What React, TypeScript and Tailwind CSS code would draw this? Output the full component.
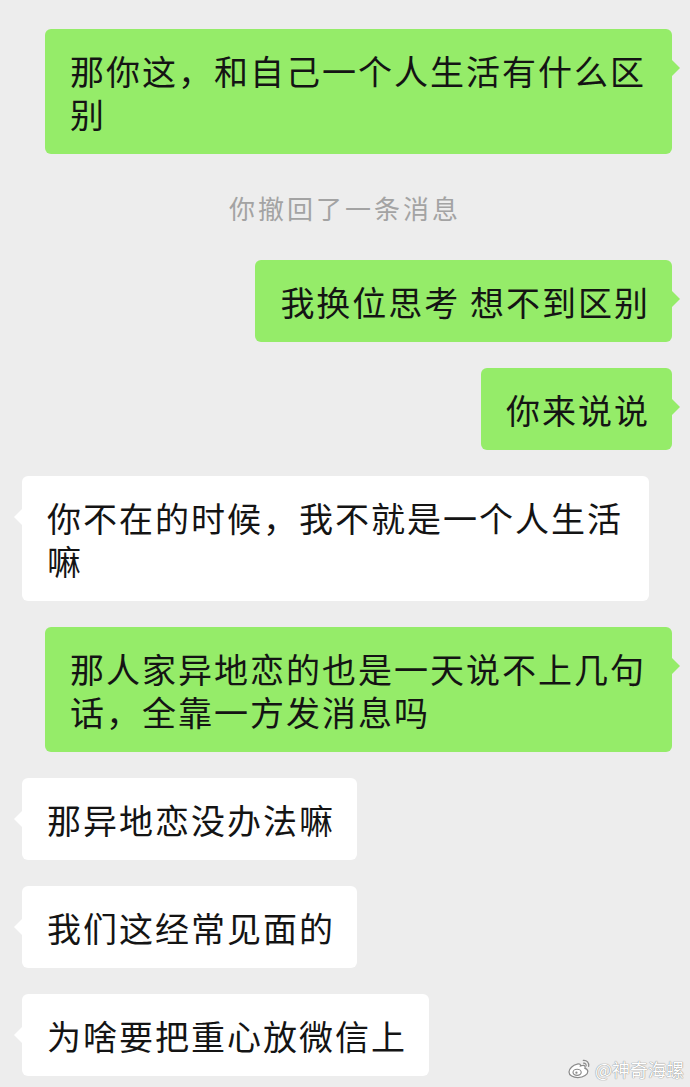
import React from "react";

type Msg =
  | { kind: "me"; text: string }
  | { kind: "other"; text: string }
  | { kind: "recall"; text: string };

const messages: Msg[] = [
  { kind: "me", text: "那你这，和自己一个人生活有什么区别" },
  { kind: "recall", text: "你撤回了一条消息" },
  { kind: "me", text: "我换位思考 想不到区别" },
  { kind: "me", text: "你来说说" },
  { kind: "other", text: "你不在的时候，我不就是一个人生活嘛" },
  { kind: "me", text: "那人家异地恋的也是一天说不上几句话，全靠一方发消息吗" },
  { kind: "other", text: "那异地恋没办法嘛" },
  { kind: "other", text: "我们这经常见面的" },
  { kind: "other", text: "为啥要把重心放微信上" },
];

function Bubble({ text, mine }: { text: string; mine: boolean }) {
  return (
    <div
      className={
        "relative max-w-[627px] rounded-[6px] pl-[25px] pr-[22px] pt-[20px] pb-[19px] text-[34px] leading-[43px] tracking-[2px] text-[#141414] " +
        (mine ? "bg-[#95ec69]" : "bg-white")
      }
    >
      {text}
      {mine ? (
        <span className="absolute left-full top-[31px] h-0 w-0 border-y-[8px] border-l-[8px] border-y-transparent border-l-[#95ec69]" />
      ) : (
        <span className="absolute right-full top-[33px] h-0 w-0 border-y-[8px] border-r-[8px] border-y-transparent border-r-white" />
      )}
    </div>
  );
}

function WeiboMark() {
  return (
    <div className="absolute bottom-[8px] right-[6px] flex items-center gap-[3px] text-[18px] leading-none text-white [text-shadow:0_0_1px_#8a8a8a,0_0_1px_#8a8a8a]">
      <svg width="25" height="21" viewBox="0 0 26 22" fill="none">
        <path
          d="M10.5 6.5c-4.5 1-8.5 4.6-8.5 8.2 0 3.6 4.4 5.8 9.3 5.8 6.3 0 10.4-3.4 10.4-6.4 0-1.9-1.6-2.9-3-3.3 0.6-1.6 0.2-3.2-2.1-3.1-1.3 0-2.6 0.6-2.6 0.6 0.3-1.6-0.4-2.6-3.5-1.8z"
          fill="white"
          stroke="#8a8a8a"
          strokeWidth="1.3"
        />
        <ellipse cx="10.5" cy="15" rx="4.3" ry="3.2" stroke="#8a8a8a" strokeWidth="1.2" />
        <circle cx="9.8" cy="15.4" r="1.2" fill="#8a8a8a" />
        <path d="M17 2.5c3.6-0.4 6.4 2.6 5.6 6.2" stroke="#8a8a8a" strokeWidth="1.3" strokeLinecap="round" />
        <path d="M17.3 5.4c1.7-0.2 3 1.2 2.7 2.9" stroke="#8a8a8a" strokeWidth="1.2" strokeLinecap="round" />
      </svg>
      <span>@神奇海螺</span>
    </div>
  );
}

export default function App() {
  return (
    <div
      className="relative h-[1087px] w-[690px] overflow-hidden bg-[#ededed]"
      style={{ fontFamily: '"Noto Sans CJK SC", "Noto Sans", sans-serif' }}
    >
      <div className="flex flex-col gap-[26px] pt-[29px]">
        {messages.map((m, i) => {
          if (m.kind === "recall") {
            return (
              <div
                key={i}
                className="flex h-[54px] items-center justify-center text-[26px] tracking-[3px] text-[#a3a3a3]"
              >
                {m.text}
              </div>
            );
          }
          const mine = m.kind === "me";
          return (
            <div
              key={i}
              className={mine ? "flex justify-end pr-[18px]" : "flex justify-start pl-[22px]"}
            >
              <Bubble text={m.text} mine={mine} />
            </div>
          );
        })}
      </div>
      <WeiboMark />
    </div>
  );
}
